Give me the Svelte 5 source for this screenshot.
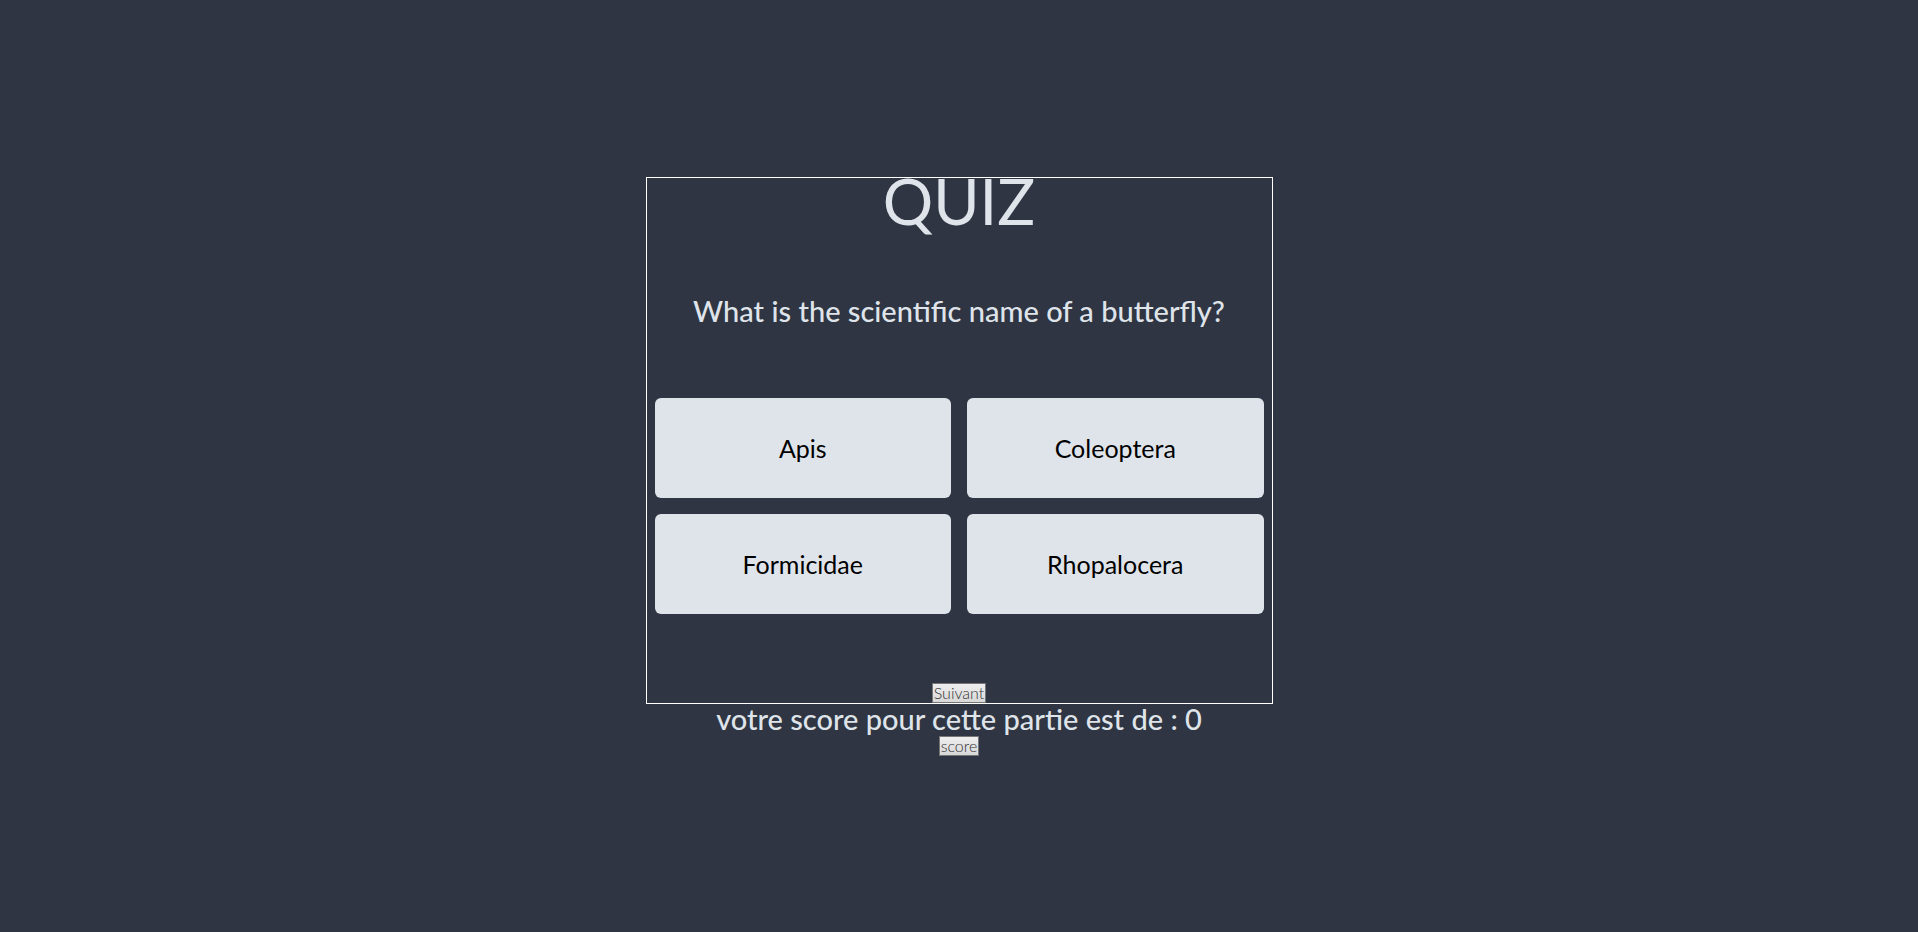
<script>
  const question = 'What is the scientific name of a butterfly?';
  const answers = ['Apis', 'Coleoptera', 'Formicidae', 'Rhopalocera'];
  let score = $state(0);
</script>

<main>
  <section class="card">
    <h1>QUIZ</h1>
    <h2>{question}</h2>
    <div class="answers">
      {#each answers as answer}
        <button class="answer" type="button">{answer}</button>
      {/each}
    </div>
    <button class="small" type="button">Suivant</button>
  </section>
  <h2 class="score">votre score pour cette partie est de : {score}</h2>
  <button class="small" type="button">score</button>
</main>

<style>
  :global(body) {
    margin: 0;
    background: #2f3542;
  }

  main {
    box-sizing: border-box;
    min-height: 100vh;
    display: flex;
    flex-direction: column;
    align-items: center;
    justify-content: center;
    font-family: Lato, sans-serif;
    color: #dfe4ea;
  }

  .card {
    box-sizing: border-box;
    width: 100%;
    max-width: 627px;
    display: flex;
    flex-direction: column;
    align-items: center;
    gap: 69px;
    border: 1px solid #fff;
  }

  h1,
  h2 {
    margin: 0;
    text-align: center;
  }

  h1 {
    font-size: 63px;
    font-weight: 400;
    line-height: 45px;
  }

  h2 {
    font-size: 29px;
    font-weight: 500;
    line-height: 37px;
  }

  .score {
    padding-bottom: 2px;
    line-height: 30px;
  }

  .answers {
    box-sizing: border-box;
    width: 100%;
    padding: 0 8px;
    display: grid;
    grid-template-columns: 1fr 1fr;
    grid-auto-rows: 100px;
    gap: 16px;
  }

  .answer {
    border: 0;
    border-radius: 6px;
    background: #dfe4ea;
    color: #000;
    font-family: inherit;
    font-size: 25px;
    cursor: pointer;
  }

  .small {
    padding: 0 1px;
    border: 1px solid #767676;
    background: linear-gradient(#eee, #d8d8d8);
    color: #333;
    font-family: inherit;
    font-size: 16px;
    font-weight: 300;
    line-height: 18px;
    cursor: pointer;
  }
</style>
